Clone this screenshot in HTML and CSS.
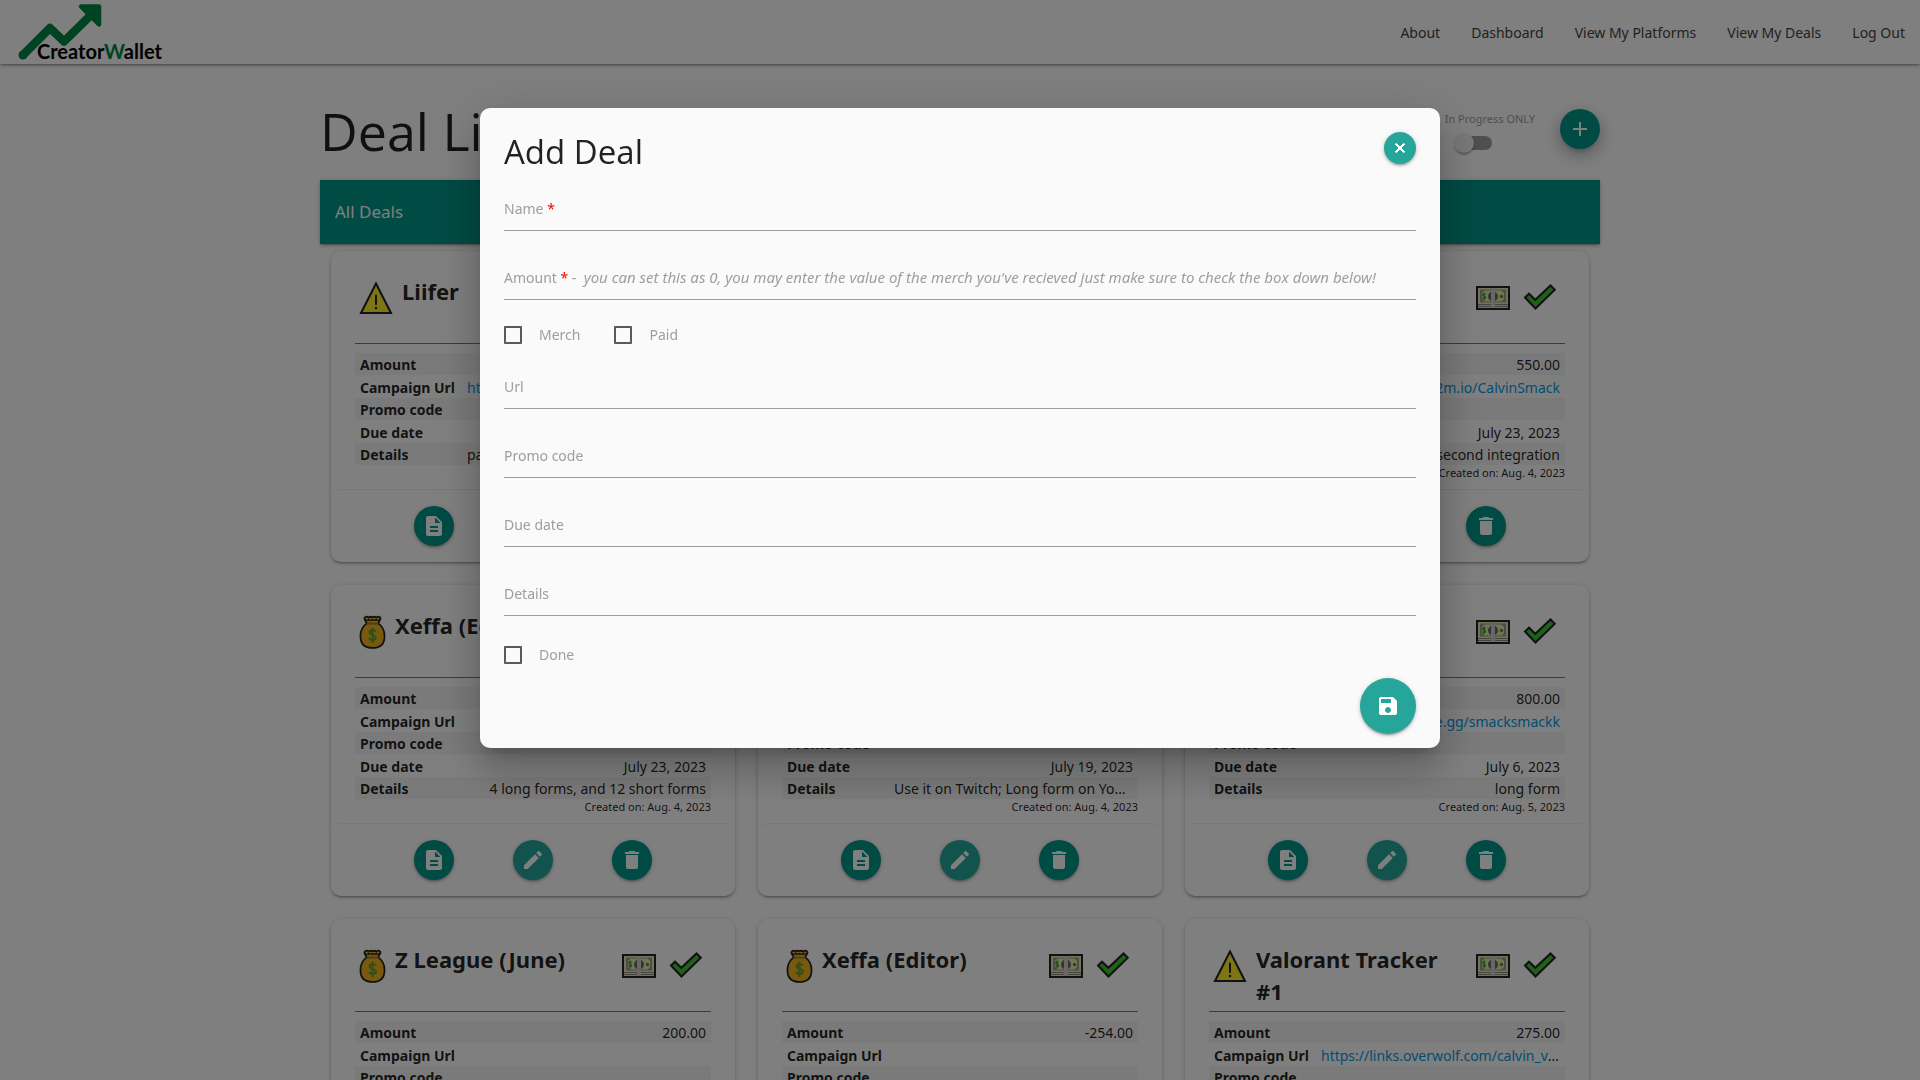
FILE: index.html
```html
<!DOCTYPE html>
<html lang="en">
<head>
<meta charset="utf-8">
<meta name="viewport" content="width=device-width, initial-scale=1">
<title>CreatorWallet - Deals</title>
<link rel="stylesheet" href="styles.css">
</head>
<body>
<svg class="sprite" aria-hidden="true">
  <symbol id="i-doc" viewBox="0 0 24 24"><path d="M14 2H6c-1.1 0-1.99.9-1.99 2L4 20c0 1.100.89 2 1.990 2H18c1.100 0 2-.9 2-2V8l-6-6zm2 16H8v-2h8v2zm0-4H8v-2h8v2zm-3-5V3.500L18.500 9H13z"/></symbol>
  <symbol id="i-edit" viewBox="0 0 24 24"><path d="M3 17.250V21h3.750L17.810 9.940l-3.750-3.750L3 17.250zM20.710 7.040c.39-.39.39-1.020 0-1.410l-2.340-2.340c-.39-.39-1.020-.39-1.410 0l-1.830 1.830 3.750 3.750 1.830-1.830z"/></symbol>
  <symbol id="i-delete" viewBox="0 0 24 24"><path d="M6 19c0 1.100.9 2 2 2h8c1.100 0 2-.9 2-2V7H6v12zM19 4h-3.500l-1-1h-5l-1 1H5v2h14V4z"/></symbol>
  <symbol id="i-add" viewBox="0 0 24 24"><path d="M19 13h-6v6h-2v-6H5v-2h6V5h2v6h6v2z"/></symbol>
  <symbol id="i-close" viewBox="0 0 24 24"><path d="M19 6.410L17.590 5 12 10.590 6.410 5 5 6.410 10.590 12 5 17.590 6.410 19 12 13.410 17.590 19 19 17.590 13.410 12z" stroke="currentColor" stroke-width="1.500"/></symbol>
  <symbol id="i-save" viewBox="0 0 24 24"><path d="M17 3H5c-1.110 0-2 .9-2 2v14c0 1.100.89 2 2 2h14c1.100 0 2-.9 2-2V7l-4-4zm-5 16c-1.660 0-3-1.340-3-3s1.340-3 3-3 3 1.340 3 3-1.340 3-3 3zm3-10H5V5h10v4z"/></symbol>
  <symbol id="e-warn" viewBox="0 0 34 34"><path d="M17 2.500L32 32H2z" fill="#fcea2b" stroke="#222" stroke-width="2"/><path d="M17 14.500V23" stroke="#222" stroke-width="2" stroke-linecap="round"/><circle cx="17" cy="27" r="1.300" fill="#222"/></symbol>
  <symbol id="e-bag" viewBox="0 0 28 36"><path d="M6 2.500q2-2 4 0 2-1.500 4-.3 2-1.200 4 .3 2-2 4 0 .6.8 0 2L20 8.500q6.500 4.500 6.500 13Q26.500 34 14 34T1.500 21.500Q1.500 13 8 8.500L5.800 4.500q-.4-1.200.2-2z" fill="#f1b31c" stroke="#222" stroke-width="1.800"/><path d="M6.500 4.500q2 1.500 3.800 0 1.900 1.500 3.700 0 1.800 1.500 3.700 0 1.800 1.500 3.800 0" fill="none" stroke="#222" stroke-width="1.300"/><path d="M8 8.800h12" stroke="#a57939" stroke-width="2"/><path d="M17.500 17c-1-2-6.500-2-6.500.8 0 3.200 6.500 2 6.500 5.400 0 3.300-6 3-7 .3M14 13v16" fill="none" stroke="#5c9e31" stroke-width="2"/></symbol>
  <symbol id="e-cash" viewBox="0 0 34 24"><path d="M1 1h32v22H1z" fill="#e6e8aa"/><path d="M4 3.500h26v13H4z" fill="#9b9b9a"/><path d="M8 4.500h7v11H8q0-2-2-2v-7q2 0 2-2zM26 4.500h-7v11h7q0-2 2-2v-7q-2 0-2-2z" fill="#e6e8aa"/><circle cx="17" cy="10.500" r="5" fill="#6b6b6b"/><path d="M2 18.500h30M2 20.500h30" stroke="#8a8a7a" stroke-width="1"/><path d="M9.500 8.500c-.8-1.200-3-.8-2.800.5.200 1.300 2.800 1 2.800 2.500 0 1.400-2.400 1.500-3 .3M8.100 6.500v8" fill="none" stroke="#3c9a35" stroke-width="1.200"/><circle cx="25.500" cy="10.500" r="1.700" fill="#3c9a35"/><path d="M15 2h4v20h-4z" fill="#d0cfce"/><path d="M1 1h32v22H1z" fill="none" stroke="#222" stroke-width="2"/></symbol>
  <symbol id="e-check" viewBox="0 0 34 28"><path d="M2 14.500l4-3.800 6.300 6.100L27.500 2.500l4.300 4.300L12.500 25.500z" fill="#3bc52f" stroke="#222" stroke-width="2"/></symbol>
</svg>

<nav class="navbar">
  <a class="logo" href="#" aria-label="CreatorWallet">
    <svg viewBox="0 0 180 64" width="180" height="64">
      <path d="M22.500 55.500L50 28 64 41.500 91 15" fill="none" stroke="#008744" stroke-width="8.500" stroke-linejoin="round"/>
      <circle cx="23" cy="55" r="4.500" fill="#008744"/>
      <path d="M81 6.500h18v18z" fill="#008744" stroke="#008744" stroke-width="4.500" stroke-linejoin="round"/>
      <text class="logo-text" x="37" y="59">Creator<tspan class="logo-w">W</tspan>allet</text>
    </svg>
  </a>
  <ul class="nav-links">
    <li><a href="#">About</a></li>
    <li><a href="#">Dashboard</a></li>
    <li><a href="#">View My Platforms</a></li>
    <li><a href="#">View My Deals</a></li>
    <li><a href="#">Log Out</a></li>
  </ul>
</nav>

<main class="container">
  <header class="page-head">
    <h1>Deal List</h1>
    <div class="tools">
      <label class="switch">
        <span>In Progress ONLY</span>
        <input type="checkbox">
      </label>
      <button class="btn btn-dark btn-add" type="button" aria-label="Add deal"><svg class="icon"><use href="#i-add"/></svg></button>
    </div>
  </header>
  <h2 class="banner">All Deals</h2>

  <section class="deals">
    <article class="card">
      <div class="card-body">
        <div class="card-head"><svg class="e-warn"><use href="#e-warn"/></svg><h3>Liifer</h3><svg class="e-cash"><use href="#e-cash"/></svg><svg class="e-check"><use href="#e-check"/></svg></div>
        <table>
          <tr><th>Amount</th><td>300.00</td></tr>
          <tr><th>Campaign Url</th><td><a href="#">https://www.liifer.com/creators/calvin_smack</a></td></tr>
          <tr><th>Promo code</th><td></td></tr>
          <tr><th>Due date</th><td>July 28, 2023</td></tr>
          <tr><th>Details</th><td>paid per video, three long form videos</td></tr>
        </table>
        <p class="created">Created on: Aug. 4, 2023</p>
      </div>
      <div class="actions">
        <button class="btn btn-dark" type="button" aria-label="View"><svg class="icon"><use href="#i-doc"/></svg></button>
        <button class="btn" type="button" aria-label="Edit"><svg class="icon"><use href="#i-edit"/></svg></button>
        <button class="btn btn-dark" type="button" aria-label="Delete"><svg class="icon"><use href="#i-delete"/></svg></button>
      </div>
    </article>
    <article class="card">
      <div class="card-body">
        <div class="card-head"><svg class="e-bag"><use href="#e-bag"/></svg><h3>Z League</h3><svg class="e-cash"><use href="#e-cash"/></svg><svg class="e-check"><use href="#e-check"/></svg></div>
        <table>
          <tr><th>Amount</th><td>200.00</td></tr>
          <tr><th>Campaign Url</th><td></td></tr>
          <tr><th>Promo code</th><td></td></tr>
          <tr><th>Due date</th><td>July 23, 2023</td></tr>
          <tr><th>Details</th><td>long form</td></tr>
        </table>
        <p class="created">Created on: Aug. 4, 2023</p>
      </div>
      <div class="actions">
        <button class="btn btn-dark" type="button" aria-label="View"><svg class="icon"><use href="#i-doc"/></svg></button>
        <button class="btn" type="button" aria-label="Edit"><svg class="icon"><use href="#i-edit"/></svg></button>
        <button class="btn btn-dark" type="button" aria-label="Delete"><svg class="icon"><use href="#i-delete"/></svg></button>
      </div>
    </article>
    <article class="card">
      <div class="card-body">
        <div class="card-head"><svg class="e-warn"><use href="#e-warn"/></svg><h3>In2m</h3><svg class="e-cash"><use href="#e-cash"/></svg><svg class="e-check"><use href="#e-check"/></svg></div>
        <table>
          <tr><th>Amount</th><td>550.00</td></tr>
          <tr><th>Campaign Url</th><td><a href="#">https://in2m.io/CalvinSmack</a></td></tr>
          <tr><th>Promo code</th><td></td></tr>
          <tr><th>Due date</th><td>July 23, 2023</td></tr>
          <tr><th>Details</th><td>60 second integration</td></tr>
        </table>
        <p class="created">Created on: Aug. 4, 2023</p>
      </div>
      <div class="actions">
        <button class="btn btn-dark" type="button" aria-label="View"><svg class="icon"><use href="#i-doc"/></svg></button>
        <button class="btn" type="button" aria-label="Edit"><svg class="icon"><use href="#i-edit"/></svg></button>
        <button class="btn btn-dark" type="button" aria-label="Delete"><svg class="icon"><use href="#i-delete"/></svg></button>
      </div>
    </article>

    <article class="card">
      <div class="card-body">
        <div class="card-head"><svg class="e-bag"><use href="#e-bag"/></svg><h3>Xeffa (Editor)</h3><svg class="e-cash"><use href="#e-cash"/></svg><svg class="e-check"><use href="#e-check"/></svg></div>
        <table>
          <tr><th>Amount</th><td>400.00</td></tr>
          <tr><th>Campaign Url</th><td></td></tr>
          <tr><th>Promo code</th><td></td></tr>
          <tr><th>Due date</th><td>July 23, 2023</td></tr>
          <tr><th>Details</th><td>4 long forms, and 12 short forms</td></tr>
        </table>
        <p class="created">Created on: Aug. 4, 2023</p>
      </div>
      <div class="actions">
        <button class="btn btn-dark" type="button" aria-label="View"><svg class="icon"><use href="#i-doc"/></svg></button>
        <button class="btn" type="button" aria-label="Edit"><svg class="icon"><use href="#i-edit"/></svg></button>
        <button class="btn btn-dark" type="button" aria-label="Delete"><svg class="icon"><use href="#i-delete"/></svg></button>
      </div>
    </article>
    <article class="card">
      <div class="card-body">
        <div class="card-head"><svg class="e-warn"><use href="#e-warn"/></svg><h3>Twitch</h3><svg class="e-cash"><use href="#e-cash"/></svg><svg class="e-check"><use href="#e-check"/></svg></div>
        <table>
          <tr><th>Amount</th><td>500.00</td></tr>
          <tr><th>Campaign Url</th><td></td></tr>
          <tr><th>Promo code</th><td></td></tr>
          <tr><th>Due date</th><td>July 19, 2023</td></tr>
          <tr><th>Details</th><td>Use it on Twitch; Long form on YouTube</td></tr>
        </table>
        <p class="created">Created on: Aug. 4, 2023</p>
      </div>
      <div class="actions">
        <button class="btn btn-dark" type="button" aria-label="View"><svg class="icon"><use href="#i-doc"/></svg></button>
        <button class="btn" type="button" aria-label="Edit"><svg class="icon"><use href="#i-edit"/></svg></button>
        <button class="btn btn-dark" type="button" aria-label="Delete"><svg class="icon"><use href="#i-delete"/></svg></button>
      </div>
    </article>
    <article class="card">
      <div class="card-body">
        <div class="card-head"><svg class="e-warn"><use href="#e-warn"/></svg><h3>League</h3><svg class="e-cash"><use href="#e-cash"/></svg><svg class="e-check"><use href="#e-check"/></svg></div>
        <table>
          <tr><th>Amount</th><td>800.00</td></tr>
          <tr><th>Campaign Url</th><td><a href="#">https://zleague.gg/smacksmackk</a></td></tr>
          <tr><th>Promo code</th><td></td></tr>
          <tr><th>Due date</th><td>July 6, 2023</td></tr>
          <tr><th>Details</th><td>long form</td></tr>
        </table>
        <p class="created">Created on: Aug. 5, 2023</p>
      </div>
      <div class="actions">
        <button class="btn btn-dark" type="button" aria-label="View"><svg class="icon"><use href="#i-doc"/></svg></button>
        <button class="btn" type="button" aria-label="Edit"><svg class="icon"><use href="#i-edit"/></svg></button>
        <button class="btn btn-dark" type="button" aria-label="Delete"><svg class="icon"><use href="#i-delete"/></svg></button>
      </div>
    </article>

    <article class="card">
      <div class="card-body">
        <div class="card-head"><svg class="e-bag"><use href="#e-bag"/></svg><h3>Z League (June)</h3><svg class="e-cash"><use href="#e-cash"/></svg><svg class="e-check"><use href="#e-check"/></svg></div>
        <table>
          <tr><th>Amount</th><td>200.00</td></tr>
          <tr><th>Campaign Url</th><td></td></tr>
          <tr><th>Promo code</th><td></td></tr>
        </table>
      </div>
    </article>
    <article class="card">
      <div class="card-body">
        <div class="card-head"><svg class="e-bag"><use href="#e-bag"/></svg><h3>Xeffa (Editor)</h3><svg class="e-cash"><use href="#e-cash"/></svg><svg class="e-check"><use href="#e-check"/></svg></div>
        <table>
          <tr><th>Amount</th><td>-254.00</td></tr>
          <tr><th>Campaign Url</th><td></td></tr>
          <tr><th>Promo code</th><td></td></tr>
        </table>
      </div>
    </article>
    <article class="card">
      <div class="card-body">
        <div class="card-head"><svg class="e-warn"><use href="#e-warn"/></svg><h3>Valorant Tracker #1</h3><svg class="e-cash"><use href="#e-cash"/></svg><svg class="e-check"><use href="#e-check"/></svg></div>
        <table>
          <tr><th>Amount</th><td>275.00</td></tr>
          <tr><th>Campaign Url</th><td><a href="#">https://links.overwolf.com/calvin_valorant</a></td></tr>
          <tr><th>Promo code</th><td></td></tr>
        </table>
      </div>
    </article>
  </section>
</main>

<div class="overlay">
  <section class="modal" role="dialog" aria-labelledby="modal-title">
    <header class="modal-head">
      <h2 id="modal-title">Add Deal</h2>
      <button class="btn btn-small" type="button" aria-label="Close"><svg class="icon"><use href="#i-close"/></svg></button>
    </header>
    <form>
      <div class="field"><input id="name" type="text"><label for="name">Name <b>*</b></label></div>
      <div class="field"><input id="amount" type="text"><label for="amount">Amount <b>*</b> -&nbsp; <em>you can set this as 0, you may enter the value of the merch you've recieved just make sure to check the box down below!</em></label></div>
      <div class="checks">
        <label><input type="checkbox">Merch</label>
        <label><input type="checkbox">Paid</label>
      </div>
      <div class="field"><input id="url" type="text"><label for="url">Url</label></div>
      <div class="field"><input id="promo" type="text"><label for="promo">Promo code</label></div>
      <div class="field"><input id="due" type="text"><label for="due">Due date</label></div>
      <div class="field"><input id="details" type="text"><label for="details">Details</label></div>
      <div class="checks checks-last">
        <label><input type="checkbox">Done</label>
      </div>
      <button class="btn btn-large" type="submit" aria-label="Save"><svg class="icon"><use href="#i-save"/></svg></button>
    </form>
  </section>
</div>
</body>
</html>
```

FILE: styles.css
```css
* { box-sizing: border-box; }

body {
  margin: 0;
  overflow: hidden;
  background: #fff;
  color: rgba(0, 0, 0, .87);
  font: 14px/22px "Noto Sans", "Open Sans", sans-serif;
}

h1, h2, h3, p, ul { margin: 0; padding: 0; font-weight: 400; }
a { color: #039be5; text-decoration: none; }
.sprite { display: none; }
.icon { width: 24px; height: 24px; fill: currentColor; }

/* Navigation */
.navbar {
  display: flex;
  justify-content: space-between;
  height: 64px;
  box-shadow: 0 2px 2px rgba(0, 0, 0, .14), 0 3px 1px -2px rgba(0, 0, 0, .12), 0 1px 5px rgba(0, 0, 0, .2);
}
.logo svg { display: block; }
.logo-text { font: 700 20px Lato, sans-serif; fill: #000; }
.logo-w { fill: #008744; }
.nav-links { display: flex; gap: 1px; list-style: none; }
.nav-links a { display: block; padding: 0 15px; line-height: 66px; color: #444; }

/* Page heading */
.container { width: 85%; max-width: 1280px; margin: 0 auto; }
.page-head {
  display: flex;
  justify-content: space-between;
  align-items: center;
  height: 102px;
  margin-top: 14px;
}
h1 { padding-top: 4px; font: 52px/60px "Open Sans", "Noto Sans", sans-serif; }
.tools { display: flex; align-items: center; gap: 25px; }
.switch { display: flex; flex-direction: column; gap: 7px; color: #9e9e9e; font-size: 11px; line-height: 20px; }
.switch input {
  appearance: none;
  display: flex;
  align-items: center;
  width: 36px;
  height: 14px;
  margin: 0 0 0 11px;
  border-radius: 15px;
  background: rgba(0, 0, 0, .38);
}
.switch input::before {
  content: "";
  flex: none;
  width: 20px;
  height: 20px;
  margin-left: -2px;
  border-radius: 50%;
  background: #f1f1f1;
  box-shadow: 0 3px 1px -2px rgba(0, 0, 0, .2), 0 2px 2px rgba(0, 0, 0, .14), 0 1px 5px rgba(0, 0, 0, .12);
}
.banner {
  padding: 0 15px;
  background: #009688;
  color: #fff;
  font-size: 17px;
  line-height: 64px;
  box-shadow: 0 2px 2px rgba(0, 0, 0, .14), 0 3px 1px -2px rgba(0, 0, 0, .12), 0 1px 5px rgba(0, 0, 0, .2);
}

/* Round buttons */
.btn {
  display: grid;
  place-items: center;
  width: 40px;
  height: 40px;
  padding: 0;
  border: 0;
  border-radius: 50%;
  background: #26a69a;
  color: #fff;
  box-shadow: 0 2px 2px rgba(0, 0, 0, .14), 0 3px 1px -2px rgba(0, 0, 0, .12), 0 1px 5px rgba(0, 0, 0, .2);
}
.btn-dark { background: #009688; }
.btn-add { box-shadow: 0 8px 17px 2px rgba(0, 0, 0, .14), 0 3px 14px 2px rgba(0, 0, 0, .12), 0 5px 5px -3px rgba(0, 0, 0, .2); }
.btn-small { width: 32px; height: 32px; }
.btn-small .icon { width: 16px; height: 16px; }
.btn-large { width: 56px; height: 56px; }

/* Deal cards */
.deals {
  display: grid;
  grid-template-columns: repeat(3, minmax(0, 1fr));
  gap: 23px;
  padding: 7px 11px 23px;
}
.card {
  border-radius: 10px;
  background: #fff;
  box-shadow: 0 2px 2px rgba(0, 0, 0, .14), 0 3px 1px -2px rgba(0, 0, 0, .12), 0 1px 5px rgba(0, 0, 0, .2);
}
.card-body { padding: 24px 24px 8px; }
.card-head {
  display: flex;
  align-items: flex-start;
  gap: 9px;
  min-height: 69px;
  margin-bottom: 9px;
  padding: 0 8px 4px 4px;
  border-bottom: 1px solid #777;
}
.card-head svg { flex: none; margin-top: 6px; }
.card-head .e-warn { width: 34px; height: 34px; }
.card-head .e-bag { width: 27px; height: 35px; }
.card-head .e-cash { width: 34px; height: 24px; margin: 11px 4px 0 0; }
.card-head .e-check { width: 34px; height: 28px; margin-top: 8px; }
h3 { flex: 1; font-size: 22px; line-height: 32px; font-weight: 700; }

table { width: 100%; table-layout: fixed; border-collapse: collapse; }
tr { height: 22px; }
tr:nth-child(even) { height: 23px; }
tr:nth-child(odd) { background: rgba(0, 0, 0, .04); }
th, td { padding: 1px 5px 0; line-height: 21px; }
th { width: 107px; text-align: left; font-weight: 700; white-space: nowrap; }
td { overflow: hidden; text-align: right; text-overflow: ellipsis; white-space: nowrap; }
.created { font-size: 11px; line-height: 16px; text-align: right; }

.actions {
  display: flex;
  justify-content: space-evenly;
  padding: 16px 24px;
  border-top: 1px solid #eee;
  border-radius: 10px;
}

/* Dialog */
.overlay {
  position: fixed;
  inset: 0;
  display: flex;
  justify-content: center;
  align-items: flex-start;
  padding-top: 10vh;
  background: rgba(0, 0, 0, .5);
}
.modal {
  width: 50%;
  padding: 24px 24px 14px;
  border-radius: 10px;
  background: #fafafa;
  box-shadow: 0 24px 38px 3px rgba(0, 0, 0, .14), 0 9px 46px 8px rgba(0, 0, 0, .12), 0 11px 15px -7px rgba(0, 0, 0, .2);
}
.modal-head { display: flex; justify-content: space-between; margin-bottom: 15px; }
.modal-head h2 { padding-top: 2px; font: 33px/36px "Open Sans", "Noto Sans", sans-serif; }
form { display: flex; flex-direction: column; color: #9e9e9e; }
.field { display: grid; margin-bottom: 23px; }
.field > * { grid-area: 1 / 1; }
.field label { align-self: center; padding-top: 2px; white-space: nowrap; pointer-events: none; }
.field b { color: red; font-weight: 400; }
.field em { font-size: 15px; line-height: 20px; }
.field input {
  width: 100%;
  height: 46px;
  padding: 0;
  border: 0;
  border-bottom: 1px solid #9e9e9e;
  background: transparent;
  font: inherit;
}
.checks { display: flex; gap: 34px; margin-bottom: 16px; }
.checks-last { margin: 4px 0 11px; }
.checks label { display: flex; align-items: center; gap: 17px; line-height: 24px; }
.checks input {
  appearance: none;
  width: 18px;
  height: 18px;
  margin: 0;
  border: 2px solid #5a5a5a;
  border-radius: 1px;
}
.btn-large { align-self: flex-end; }
```
